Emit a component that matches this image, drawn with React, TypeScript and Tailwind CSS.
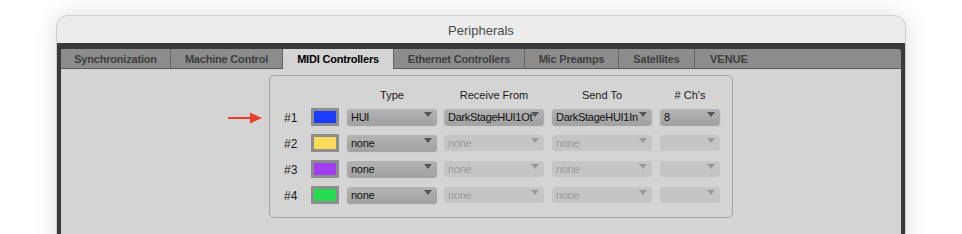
import React from "react";

const tabs = [
  { label: "Synchronization", w: "w-[110px]" },
  { label: "Machine Control", w: "w-[112px]" },
  { label: "MIDI Controllers", w: "w-[111px]", active: true },
  { label: "Ethernet Controllers", w: "w-[131px]" },
  { label: "Mic Preamps", w: "w-[94px]" },
  { label: "Satellites", w: "w-[76px]" },
];

const rows = [
  { n: "#1", color: "bg-[#1b3bff]", type: "HUI", recv: "DarkStageHUI1Ot", send: "DarkStageHUI1In", ch: "8", on: true },
  { n: "#2", color: "bg-[#fddb5b]", type: "none", recv: "none", send: "none", ch: "" },
  { n: "#3", color: "bg-[#a23ef2]", type: "none", recv: "none", send: "none", ch: "" },
  { n: "#4", color: "bg-[#25dc4f]", type: "none", recv: "none", send: "none", ch: "" },
];

function Select({ value, width, enabled }: { value: string; width: string; enabled: boolean }) {
  return (
    <div
      className={`${width} h-[16px] rounded-[3px] relative flex items-center pl-[4px] text-[11px] leading-none tracking-[-0.3px] ${
        enabled
          ? "bg-gradient-to-b from-[#b3b3b3] to-[#a2a2a2] text-[#111] shadow-[0_1px_1px_rgba(0,0,0,0.25)]"
          : "bg-[#c5c5c5] text-[#9a9a9a]"
      }`}
    >
      <span className="whitespace-nowrap">{value}</span>
      <svg width="8" height="5" viewBox="0 0 8 5" className="absolute right-[5px] top-[3px]">
        <polygon points="0,0 8,0 4,5" fill={enabled ? "#555" : "#9a9a9a"} />
      </svg>
    </div>
  );
}

export default function App() {
  return (
    <div className="w-[962px] h-[234px] bg-white overflow-hidden pt-[15px] px-[56px] font-['Liberation_Sans',Arial,sans-serif]">
      <div className="h-[240px] rounded-t-[12px] border border-[#cfcfcf] bg-[#ececec] shadow-[0_0_22px_rgba(0,0,0,0.14)] flex flex-col overflow-hidden">
        <div className="h-[27px] pt-[2px] flex items-center justify-center text-[13px] text-[#4a4a4a] font-medium">
          Peripherals
        </div>
        <div className="flex-1 bg-[#3a3a3a] pt-[6px] px-[4px] flex flex-col">
          <div className="h-[20px] flex bg-[#8c8c8c] border-b border-[#5a5a5a] rounded-tr-[3px]">
            {tabs.map((t) => (
              <div
                key={t.label}
                className={`${t.w} flex items-center justify-center pt-[1px] text-[11px] font-bold tracking-[-0.2px] border-r border-[#666] ${
                  t.active ? "bg-[#d4d4d4] text-black h-[20px] -mb-px" : "text-[#3e3e3e]"
                }`}
              >
                {t.label}
              </div>
            ))}
            <div className="pl-[15px] pt-[1px] flex items-center text-[11px] font-bold text-[#3e3e3e]">VENUE</div>
          </div>
          <div className="flex-1 bg-[#d4d4d4] pt-[6px] pl-[208px] relative">
            <svg width="36" height="12" viewBox="0 0 36 12" className="absolute left-[167px] top-[43px]">
              <line x1="0" y1="6" x2="24" y2="6" stroke="#e9402b" strokeWidth="2.2" />
              <polygon points="22,0.5 34,6 22,11.5" fill="#e9402b" />
            </svg>
            <div className="w-[464px] border border-[#a3a3a3] rounded-[5px] pt-[12px] pb-[13px] pl-[14px] text-[11px] text-[#1a1a1a]">
              <div className="flex h-[14px] items-center">
                <div className="w-[27px]" />
                <div className="w-[28px] mr-[8px]" />
                <div className="w-[90px] mr-[7px] text-center">Type</div>
                <div className="w-[100px] mr-[8px] text-center">Receive From</div>
                <div className="w-[100px] mr-[8px] text-center">Send To</div>
                <div className="w-[60px] text-center"># Ch's</div>
              </div>
              <div className="mt-[6px] flex flex-col gap-[8px]">
                {rows.map((r) => (
                  <div key={r.n} className="flex items-center h-[18px]">
                    <div className="w-[27px] pt-[2px] text-[12px] text-[#1a1a1a]">{r.n}</div>
                    <div className="w-[28px] h-[18px] mr-[8px] bg-[#8d8d8d] p-[3px]">
                      <div className={`w-full h-full ${r.color}`} />
                    </div>
                    <div className="mr-[7px]">
                      <Select value={r.type} width="w-[90px]" enabled />
                    </div>
                    <div className="mr-[8px]">
                      <Select value={r.recv} width="w-[100px]" enabled={!!r.on} />
                    </div>
                    <div className="mr-[8px]">
                      <Select value={r.send} width="w-[100px]" enabled={!!r.on} />
                    </div>
                    <Select value={r.ch} width="w-[60px]" enabled={!!r.on} />
                  </div>
                ))}
              </div>
            </div>
          </div>
        </div>
      </div>
    </div>
  );
}
